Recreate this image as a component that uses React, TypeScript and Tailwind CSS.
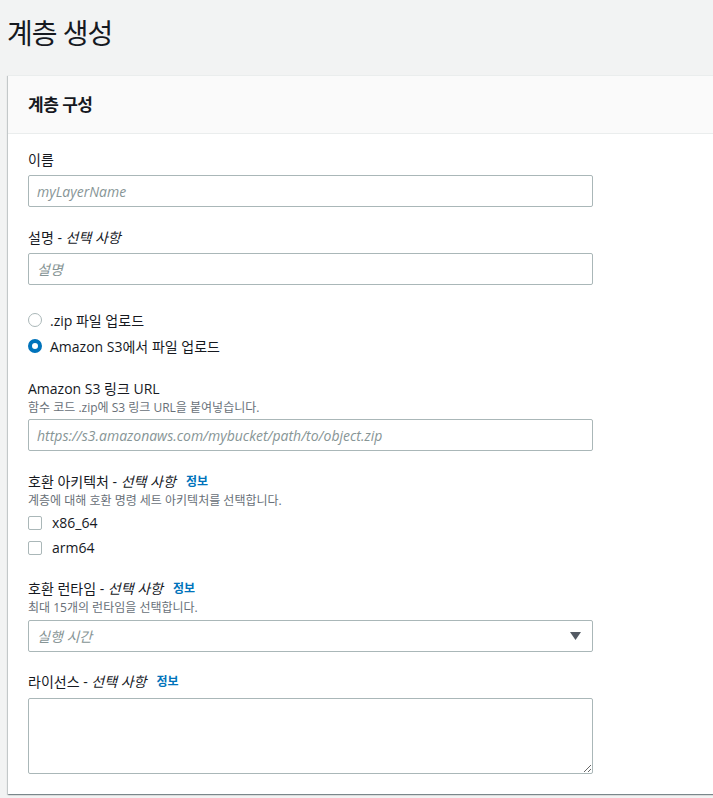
import React from "react";

const font = "font-['Open_Sans','Noto_Sans_CJK_KR',sans-serif]";

const Info = () => (
  <span className="ml-[10px] text-[12px] font-bold text-[#0073bb]">정보</span>
);

const Label = ({ main, optional, info }: { main: string; optional?: boolean; info?: boolean }) => (
  <div className="flex items-center text-[14px] leading-[20px] text-[#16191f]">
    <span>
      {main}
      {optional && (
        <>
          {" - "}
          <i>선택 사항</i>
        </>
      )}
    </span>
    {info && <Info />}
  </div>
);

const Desc = ({ children }: { children: React.ReactNode }) => (
  <div className="mt-[1px] text-[12px] leading-[16px] text-[#687078]">{children}</div>
);

const TextInput = ({ placeholder, className = "" }: { placeholder: string; className?: string }) => (
  <input
    placeholder={placeholder}
    className={`block h-[32px] w-[565px] rounded-[2px] border border-[#aab7b8] bg-white px-[8px] text-[14px] text-[#16191f] placeholder:italic placeholder:text-[#879596] outline-none ${className}`}
  />
);

const Radio = ({ checked, label }: { checked?: boolean; label: string }) => (
  <div className="flex h-[26px] items-center gap-[8px]">
    {checked ? (
      <span className="box-border h-[14px] w-[14px] rounded-full border-[4px] border-[#0073bb] bg-white" />
    ) : (
      <span className="box-border h-[14px] w-[14px] rounded-full border-[1.5px] border-[#aab7b8] bg-white" />
    )}
    <span className="text-[14px] text-[#16191f]">{label}</span>
  </div>
);

const Checkbox = ({ label }: { label: string }) => (
  <div className="flex h-[25px] items-center gap-[10px]">
    <span className="box-border h-[14px] w-[14px] rounded-[2px] border border-[#aab7b8] bg-white" />
    <span className="text-[14px] text-[#16191f]">{label}</span>
  </div>
);

export default function App() {
  return (
    <div className={`min-h-[798px] w-full overflow-hidden bg-[#f2f3f3] ${font}`}>
      <h1 className="pl-[7px] pt-[15px] text-[28px] font-normal leading-[36px] tracking-[-1px] text-[#16191f]">
        계층 생성
      </h1>

      <div className="ml-[8px] mt-[24px] w-[720px] border-t border-[#eaeded] bg-white shadow-[0_1px_1px_0_rgba(0,28,36,0.3),1px_1px_1px_0_rgba(0,28,36,0.15),-1px_1px_1px_0_rgba(0,28,36,0.15)]">
        <div className="flex h-[58px] items-center border-b border-[#eaeded] bg-[#fafafa] px-[20px]">
          <h2 className="text-[17px] font-bold tracking-[-0.5px] text-[#16191f]">계층 구성</h2>
        </div>

        <div className="px-[20px] pb-[20px] pt-[16px]">
          {/* name */}
          <Label main="이름" />
          <TextInput placeholder="myLayerName" className="mt-[5px]" />

          {/* description */}
          <div className="mt-[21px]">
            <Label main="설명" optional />
          </div>
          <TextInput placeholder="설명" className="mt-[5px]" />

          {/* upload source */}
          <div className="mt-[22px]">
            <Radio label=".zip 파일 업로드" />
            <Radio checked label="Amazon S3에서 파일 업로드" />
          </div>

          {/* s3 url */}
          <div className="mt-[20px]">
            <Label main="Amazon S3 링크 URL" />
            <Desc>함수 코드 .zip에 S3 링크 URL을 붙여넣습니다.</Desc>
          </div>
          <TextInput
            placeholder="https://s3.amazonaws.com/mybucket/path/to/object.zip"
            className="mt-[3px]"
          />

          {/* architectures */}
          <div className="mt-[21px]">
            <Label main="호환 아키텍처" optional info />
            <Desc>계층에 대해 호환 명령 세트 아키텍처를 선택합니다.</Desc>
          </div>
          <div className="mt-[1px]">
            <Checkbox label="x86_64" />
            <Checkbox label="arm64" />
          </div>

          {/* runtimes */}
          <div className="mt-[19px]">
            <Label main="호환 런타임" optional info />
            <Desc>최대 15개의 런타임을 선택합니다.</Desc>
          </div>
          <div className="mt-[4px] flex h-[32px] w-[565px] items-center justify-between rounded-[2px] border border-[#aab7b8] bg-white pl-[8px] pr-[11px]">
            <span className="text-[14px] italic text-[#879596]">실행 시간</span>
            <svg width="11" height="8" viewBox="0 0 11 8">
              <path d="M0 0 H11 L5.5 8 Z" fill="#545b64" />
            </svg>
          </div>

          {/* license */}
          <div className="mt-[20px]">
            <Label main="라이선스" optional info />
          </div>
          <textarea className="mt-[6px] block h-[76px] w-[565px] rounded-[2px] border border-[#aab7b8] bg-white px-[8px] py-[4px] text-[14px] outline-none" />
        </div>
      </div>
    </div>
  );
}
